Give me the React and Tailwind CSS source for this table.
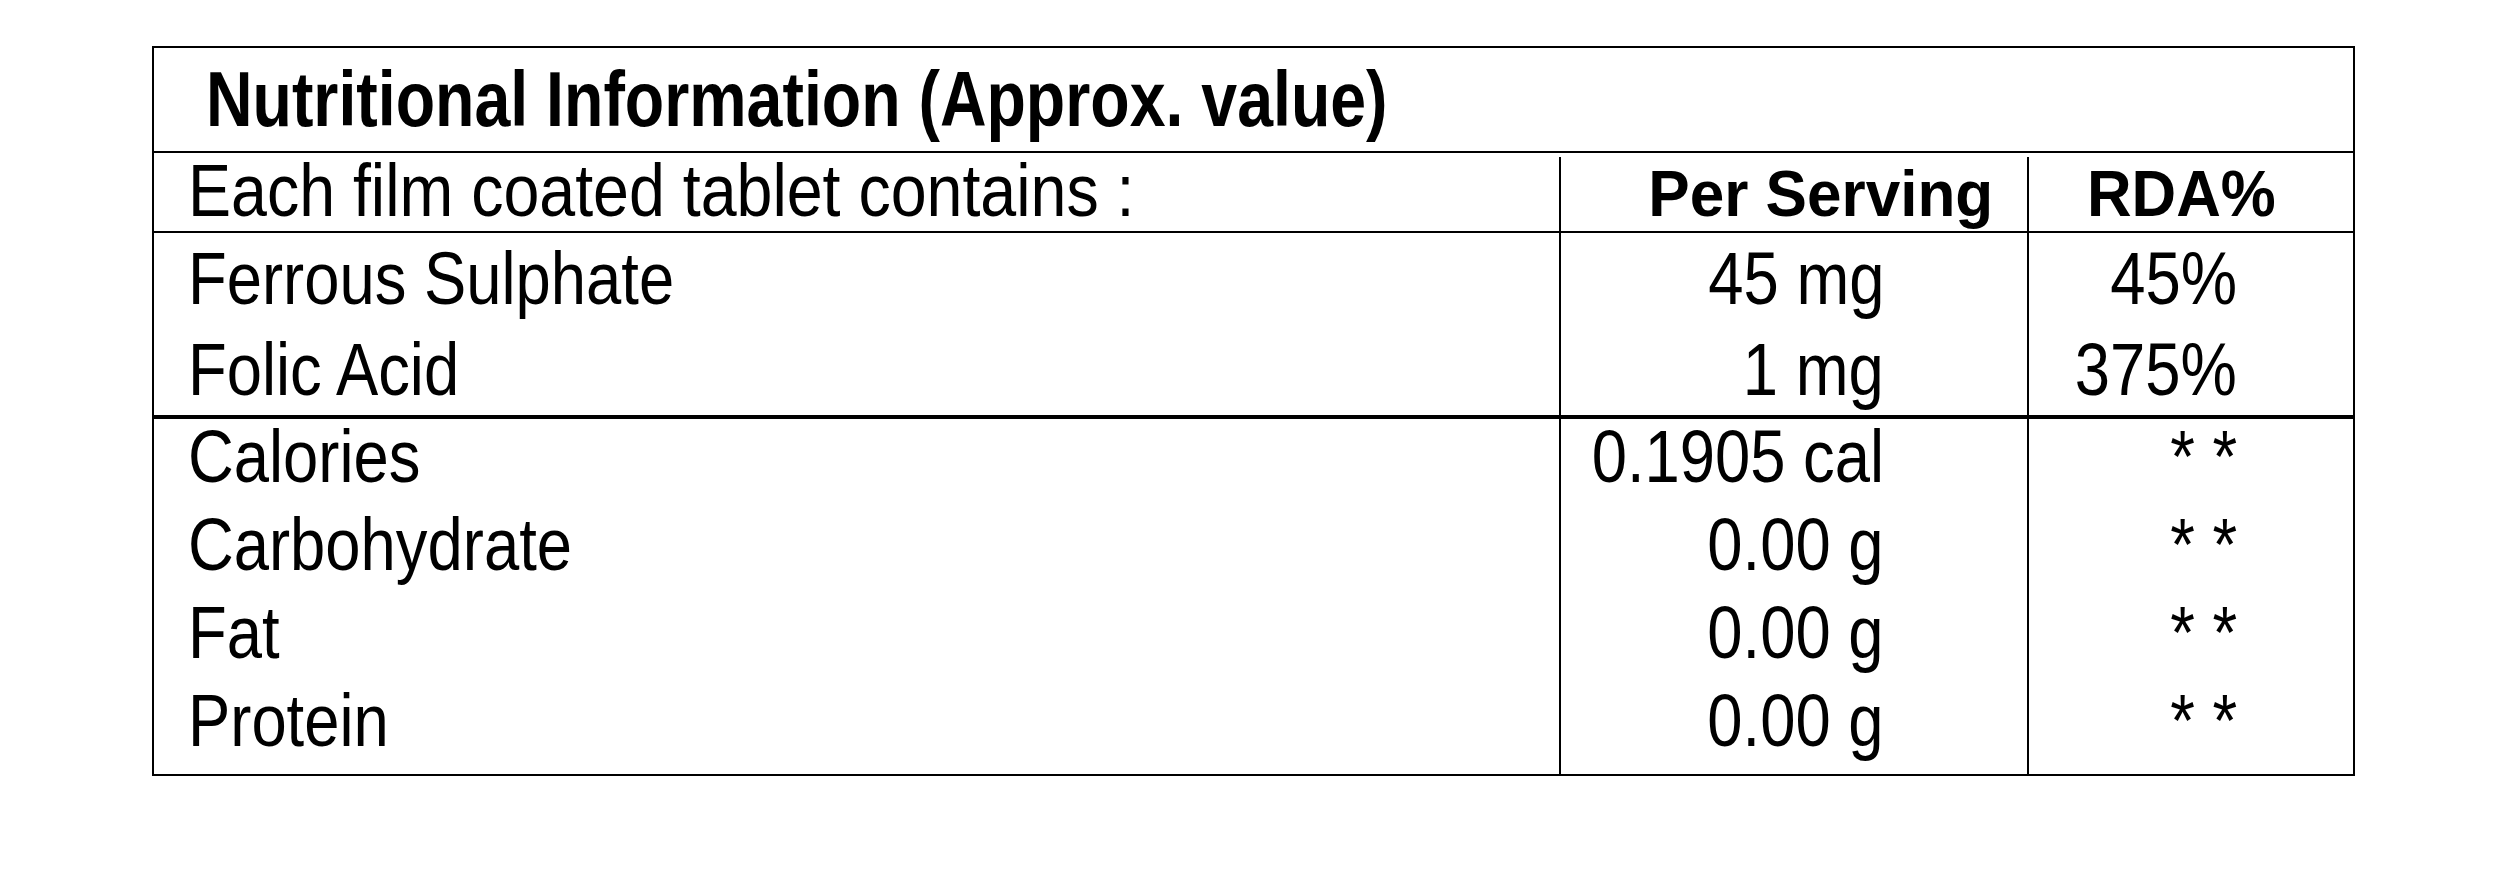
const topRows = [
  { name: "Ferrous Sulphate", amount: "45 mg", rda: "45%" },
  { name: "Folic Acid", amount: "1 mg", rda: "375%" },
];

const bottomRows = [
  { name: "Calories", amount: "0.1905 cal", rda: "* *" },
  { name: "Carbohydrate", amount: "0.00 g", rda: "* *" },
  { name: "Fat", amount: "0.00 g", rda: "* *" },
  { name: "Protein", amount: "0.00 g", rda: "* *" },
];

const font = "font-['Liberation_Sans_Narrow','Arial_Narrow','Liberation_Sans',sans-serif]";

// no condensed face installed, so squeeze Liberation Sans horizontally
function Narrow({ right, children }) {
  return right ? (
    <span className="inline-block whitespace-nowrap origin-right scale-x-[0.845]">{children}</span>
  ) : (
    <span className="inline-block whitespace-nowrap origin-left scale-x-[0.845]">{children}</span>
  );
}

export default function App() {
  return (
    <div className={`min-h-screen bg-white pt-[46px] pl-[152px] text-black ${font}`}>
      <div className="w-[2203px] h-[730px] border-2 border-black flex flex-col">
        <div className="h-[105px] border-b-2 border-black pl-[52px] text-[77px] font-bold leading-[103px]">
          <span className="inline-block whitespace-nowrap origin-left scale-x-[0.837]">
            Nutritional Information (Approx. value)
          </span>
        </div>

        <div className="flex h-[80px] border-b-2 border-black pt-[4px]">
          <div className="w-[1407px] border-r-2 border-black pl-[34px] text-[75px] leading-[66px]">
            <span className="inline-block whitespace-nowrap origin-left scale-x-[0.86]">
              Each film coated tablet contains :
            </span>
          </div>
          <div className="w-[468px] border-r-2 border-black pr-[34px] text-right text-[65px] font-bold leading-[73px]">
            <span className="inline-block whitespace-nowrap origin-right scale-x-[0.955]">Per Serving</span>
          </div>
          <div className="flex-1 pl-[58px] text-[65px] font-bold leading-[73px]">
            <span className="inline-block whitespace-nowrap origin-left scale-x-[0.95]">RDA%</span>
          </div>
        </div>

        <div className="flex flex-col border-b-4 border-black text-[75px]">
          {topRows.map((row) => (
            <div key={row.name} className="flex h-[91px] leading-[91px]">
              <div className="w-[1407px] border-r-2 border-black pl-[34px]">
                <Narrow>{row.name}</Narrow>
              </div>
              <div className="w-[468px] flex justify-end border-r-2 border-black pr-[143px]">
                <Narrow right>{row.amount}</Narrow>
              </div>
              <div className="flex-1 flex justify-end pr-[116px]">
                <Narrow right>{row.rda}</Narrow>
              </div>
            </div>
          ))}
        </div>

        <div className="flex flex-1 text-[75px]">
          <div className="w-[1407px] border-r-2 border-black pl-[34px]">
            {bottomRows.map((row) => (
              <div key={row.name} className="h-[88px] leading-[74px]">
                <Narrow>{row.name}</Narrow>
              </div>
            ))}
          </div>
          <div className="w-[468px] border-r-2 border-black pr-[143px]">
            {bottomRows.map((row) => (
              <div key={row.name} className="flex h-[88px] justify-end leading-[74px]">
                <Narrow right>{row.amount}</Narrow>
              </div>
            ))}
          </div>
          <div className="flex-1 pr-[116px]">
            {bottomRows.map((row) => (
              <div key={row.name} className="flex h-[88px] justify-end leading-[74px]">
                <Narrow right>{row.rda}</Narrow>
              </div>
            ))}
          </div>
        </div>
      </div>
    </div>
  );
}
